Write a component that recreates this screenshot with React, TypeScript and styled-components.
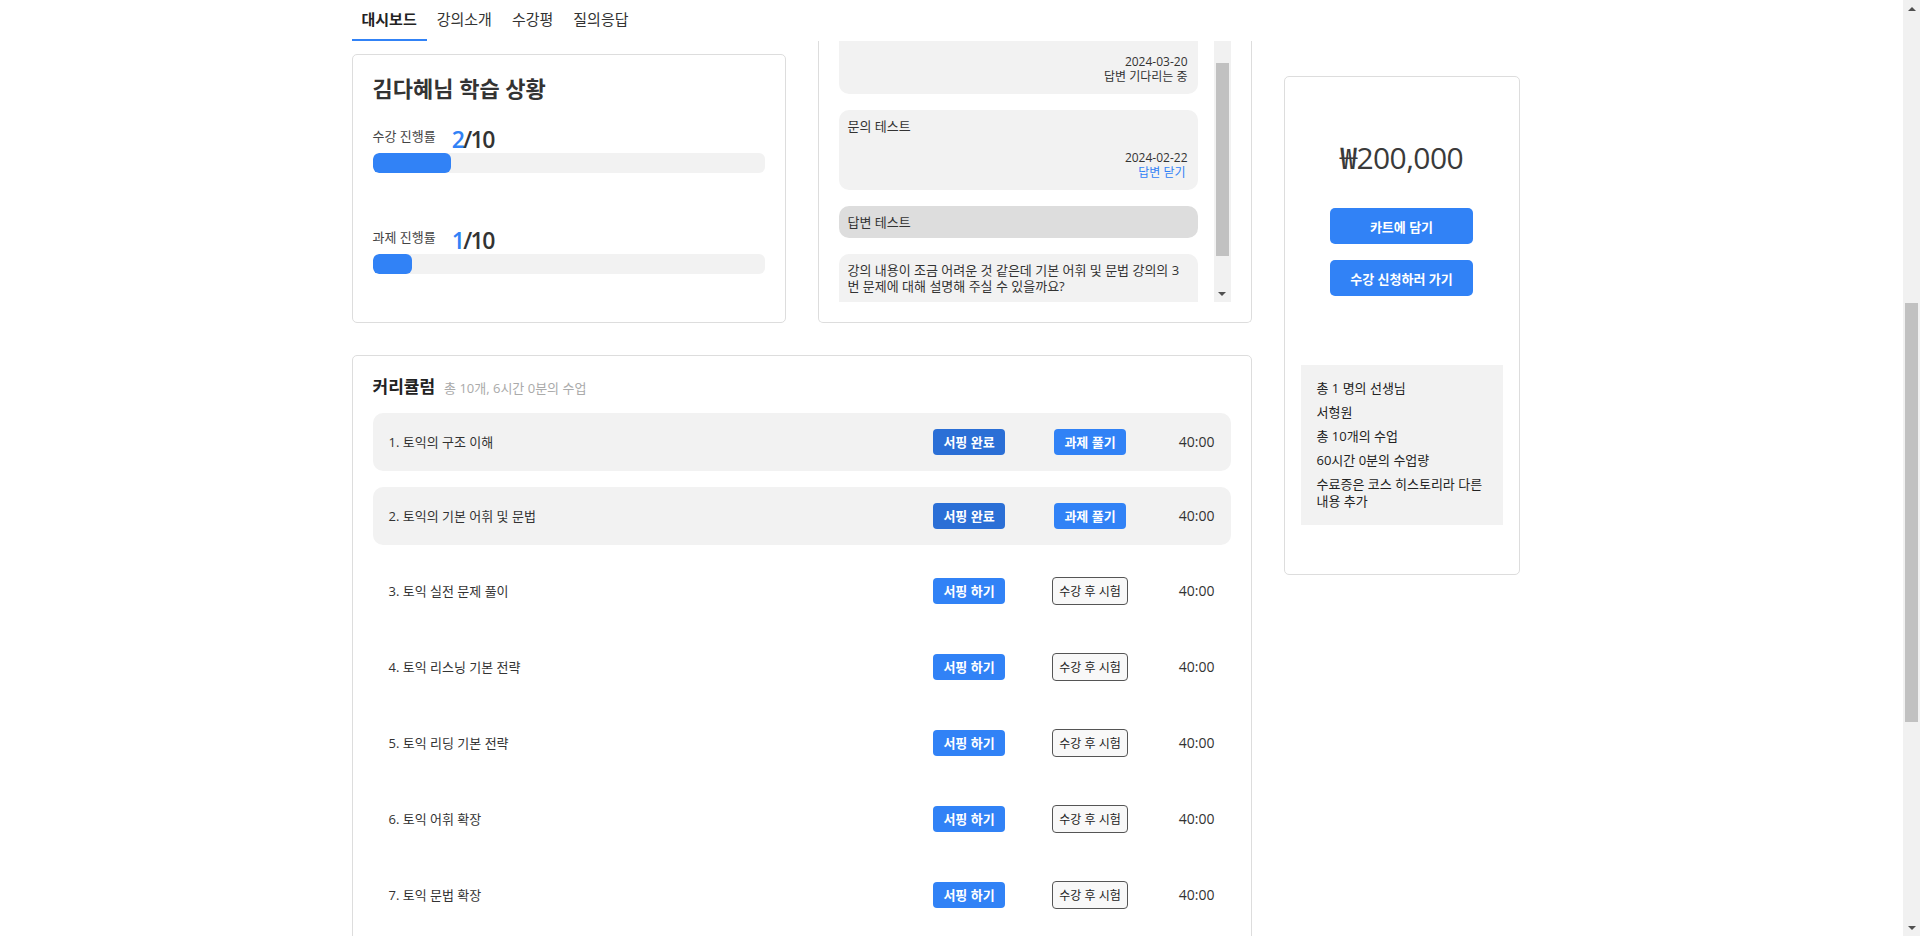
import React, { useLayoutEffect, useRef } from "react";
import styled, { createGlobalStyle } from "styled-components";

const GlobalStyle = createGlobalStyle`
  html, body { margin: 0; padding: 0; background: #fff; }
  * { box-sizing: border-box; }
  body {
    font-family: "Open Sans", "Noto Sans CJK KR", sans-serif;
    color: #333;
    padding-right: 17px;
  }
`;

/* Scrollbar drawing (browser chrome look) */
const ArrowBox = styled.div<{ $dir: "up" | "down" }>`
  flex: 0 0 17px;
  height: 17px;
  display: flex;
  align-items: center;
  justify-content: center;

  &::before {
    content: "";
    width: 0;
    height: 0;
    border-left: 4px solid transparent;
    border-right: 4px solid transparent;
    ${(p) =>
      p.$dir === "up"
        ? "border-bottom: 4px solid #505050;"
        : "border-top: 4px solid #505050;"}
  }
`;

const ScrollTrack = styled.div`
  width: 17px;
  background: #f1f1f1;
  display: flex;
  flex-direction: column;
`;

const PageScrollbar = styled(ScrollTrack)`
  position: fixed;
  top: 0;
  right: 0;
  height: 100vh;
  z-index: 10;
`;

const Thumb = styled.div<{ $offset: number; $size: number }>`
  margin: ${(p) => p.$offset}px 2px 0;
  height: ${(p) => p.$size}px;
  background: #c1c1c1;
`;

const TrackFill = styled.div`
  flex: 1;
`;

/* Layout */
const Page = styled.div`
  width: 1200px;
  margin: 0 auto;
  display: grid;
  grid-template-columns: 900px 300px;
  padding-bottom: 60px;
`;

const Main = styled.main`
  display: flex;
  flex-direction: column;
`;

const Aside = styled.aside`
  padding: 76px 32px 0;
`;

/* Tabs */
const Tabs = styled.nav`
  display: flex;
  height: 41px;
`;

const Tab = styled.a<{ $active?: boolean }>`
  display: block;
  padding: 9px 10px 10px;
  font-size: 15px;
  line-height: 20px;
  color: ${(p) => (p.$active ? "#222" : "#333")};
  font-weight: ${(p) => (p.$active ? 600 : 400)};
  border-bottom: 2px solid ${(p) => (p.$active ? "#3182f6" : "transparent")};
  cursor: pointer;
`;

/* Top row */
const TopRow = styled.div`
  display: grid;
  grid-template-columns: 434px 434px;
  column-gap: 32px;
  align-items: end;
`;

const StatusCard = styled.section`
  border: 1px solid #ddd;
  border-radius: 5px;
  padding: 20px 20px 48px;
`;

const StatusHeading = styled.h2`
  margin: 0 0 25px;
  font-size: 22px;
  line-height: 26px;
  font-weight: 700;
  color: #333;
`;

const ProgressGroup = styled.div`
  & + & {
    margin-top: 54px;
  }
`;

const ProgressHead = styled.div`
  display: flex;
  align-items: flex-start;
  gap: 16px;
`;

const ProgressLabel = styled.span`
  font-size: 13px;
  line-height: 20px;
  color: #444;
`;

const ProgressValue = styled.span`
  font-size: 23px;
  line-height: 27px;
  font-weight: 600;
  color: #333;
  letter-spacing: -0.07em;
`;

const Accent = styled.span`
  color: #3182f6;
`;

const Track = styled.div`
  height: 20px;
  border-radius: 6px;
  background: #f2f2f2;
  overflow: hidden;
`;

const Fill = styled.div`
  height: 100%;
  border-radius: 6px;
  background: #3182f6;
`;

/* Q&A */
const QnaCard = styled.section`
  border: 1px solid #ddd;
  border-top: none;
  border-radius: 0 0 5px 5px;
  padding: 0 20px 20px;
`;

const QnaBody = styled.div`
  display: flex;
  height: 261px;
`;

const QnaViewport = styled.div`
  flex: 1;
  overflow: hidden;
  padding-right: 16px;
  display: flex;
  flex-direction: column;
  gap: 16px;
`;

const Bubble = styled.div<{ $answer?: boolean }>`
  flex-shrink: 0;
  background: ${(p) => (p.$answer ? "#dddddd" : "#f2f2f2")};
  border-radius: 10px;
  padding: 8px 10px ${(p) => (p.$answer ? "8px" : "10px")} 9px;
`;

const BubbleText = styled.p`
  margin: 0;
  font-size: 13px;
  line-height: 16px;
  color: #333;
`;

const BubbleMeta = styled.div`
  margin-top: 16px;
  display: flex;
  flex-direction: column;
  align-items: flex-end;
  font-size: 12px;
  line-height: 15px;
  color: #333;
`;

const MetaLink = styled.button`
  all: unset;
  padding-right: 2px;
  color: #3182f6;
  font-size: 12px;
  line-height: 15px;
  cursor: pointer;
`;

/* Curriculum */
const CurriculumCard = styled.section`
  margin-top: 32px;
  border: 1px solid #ddd;
  border-radius: 5px;
  padding: 20px;
`;

const CurriculumHeader = styled.div`
  display: flex;
  align-items: baseline;
  gap: 9px;
  margin-bottom: 16px;
`;

const CurriculumTitle = styled.h3`
  margin: 0;
  font-size: 17px;
  line-height: 21px;
  font-weight: 700;
  color: #222;
`;

const CurriculumMeta = styled.span`
  font-size: 13px;
  color: #aaa;
`;

const LessonList = styled.div`
  display: flex;
  flex-direction: column;
  gap: 16px;
`;

const Lesson = styled.div<{ $done?: boolean }>`
  display: grid;
  grid-template-columns: 1fr 121px 121px 64px;
  align-items: center;
  padding: 16px;
  border-radius: 10px;
  background: ${(p) => (p.$done ? "#f2f2f2" : "transparent")};
`;

const LessonTitle = styled.span`
  font-size: 13px;
  line-height: 20px;
  color: #333;
`;

const Cell = styled.div`
  display: flex;
  justify-content: center;
`;

const Time = styled.span`
  text-align: right;
  font-size: 14px;
  line-height: 20px;
  color: #333;
`;

const SolidButton = styled.button<{ $dark?: boolean }>`
  height: 26px;
  padding: 0 10px;
  border: none;
  border-radius: 4px;
  background: ${(p) => (p.$dark ? "#2b6fd6" : "#3182f6")};
  color: #fff;
  font-family: inherit;
  font-size: 13px;
  font-weight: 700;
  line-height: 26px;
  cursor: pointer;
`;

const OutlineButton = styled.button`
  height: 28px;
  padding: 0 6px;
  border: 1px solid #555;
  border-radius: 4px;
  background: #f8f8f8;
  color: #222;
  font-family: inherit;
  font-size: 12px;
  cursor: pointer;
`;

/* Aside */
const PriceCard = styled.div`
  border: 1px solid #ddd;
  border-radius: 5px;
  padding: 16px;
  display: flex;
  flex-direction: column;
  align-items: center;
`;

const Price = styled.div`
  margin-top: 45px;
  font-size: 30px;
  line-height: 40px;
  font-weight: 500;
  color: #3a3a3a;
  letter-spacing: -0.02em;
`;

const ActionStack = styled.div`
  margin-top: 30px;
  display: flex;
  flex-direction: column;
  gap: 16px;
`;

const ActionButton = styled.button`
  width: 143px;
  height: 36px;
  border: none;
  border-radius: 5px;
  background: #3182f6;
  color: #fff;
  font-family: inherit;
  font-size: 13px;
  font-weight: 700;
  cursor: pointer;
`;

const InfoBox = styled.ul`
  align-self: stretch;
  margin: 69px 0 33px;
  padding: 15px 16px;
  list-style: none;
  background: #f2f2f2;
  display: flex;
  flex-direction: column;
  gap: 7px;
`;

const InfoItem = styled.li`
  font-size: 13px;
  line-height: 17px;
  color: #222;
  word-break: keep-all;
`;

type LessonItem = { title: string; done?: boolean };

const lessons: LessonItem[] = [
  { title: "토익의 구조 이해", done: true },
  { title: "토익의 기본 어휘 및 문법", done: true },
  { title: "토익 실전 문제 풀이" },
  { title: "토익 리스닝 기본 전략" },
  { title: "토익 리딩 기본 전략" },
  { title: "토익 어휘 확장" },
  { title: "토익 문법 확장" },
  { title: "토익 실전 모의고사 1" },
  { title: "토익 실전 모의고사 2" },
  { title: "토익 최종 정리" },
];

type Qna = {
  answer?: boolean;
  text: string;
  date?: string;
  status?: string;
  link?: string;
};

const qna: Qna[] = [
  {
    text: "수업 자료는 어디서 받을 수 있나요?",
    date: "2024-03-20",
    status: "답변 기다리는 중",
  },
  { text: "문의 테스트", date: "2024-02-22", link: "답변 닫기" },
  { answer: true, text: "답변 테스트" },
  {
    text: "강의 내용이 조금 어려운 것 같은데 기본 어휘 및 문법 강의의 3번 문제에 대해 설명해 주실 수 있을까요?",
    date: "2024-02-20",
    status: "답변 기다리는 중",
  },
];

const progress = [
  { label: "수강 진행률", done: 2, total: 10 },
  { label: "과제 진행률", done: 1, total: 10 },
];

const tabs = ["대시보드", "강의소개", "수강평", "질의응답"];

export default function App() {
  const listRef = useRef<HTMLDivElement>(null);

  useLayoutEffect(() => {
    if (listRef.current) listRef.current.scrollTop = 27;
  }, []);

  return (
    <>
      <GlobalStyle />
      <PageScrollbar aria-hidden>
        <ArrowBox $dir="up" />
        <Thumb $offset={286} $size={419} />
        <TrackFill />
        <ArrowBox $dir="down" />
      </PageScrollbar>
      <Page>
        <Main>
          <Tabs>
            {tabs.map((t, i) => (
              <Tab key={t} $active={i === 0}>
                {t}
              </Tab>
            ))}
          </Tabs>

          <TopRow>
            <StatusCard>
              <StatusHeading>김다혜님 학습 상황</StatusHeading>
              {progress.map((p) => (
                <ProgressGroup key={p.label}>
                  <ProgressHead>
                    <ProgressLabel>{p.label}</ProgressLabel>
                    <ProgressValue>
                      <Accent>{p.done}</Accent>/{p.total}
                    </ProgressValue>
                  </ProgressHead>
                  <Track>
                    <Fill style={{ width: `${(p.done / p.total) * 100}%` }} />
                  </Track>
                </ProgressGroup>
              ))}
            </StatusCard>

            <QnaCard>
              <QnaBody>
                <QnaViewport ref={listRef}>
                  {qna.map((q, i) => (
                    <Bubble key={i} $answer={q.answer}>
                      <BubbleText>{q.text}</BubbleText>
                      {q.date && (
                        <BubbleMeta>
                          <span>{q.date}</span>
                          {q.status && <span>{q.status}</span>}
                          {q.link && <MetaLink>{q.link}</MetaLink>}
                        </BubbleMeta>
                      )}
                    </Bubble>
                  ))}
                </QnaViewport>
                <ScrollTrack aria-hidden>
                  <Thumb $offset={22} $size={193} />
                  <TrackFill />
                  <ArrowBox $dir="down" />
                </ScrollTrack>
              </QnaBody>
            </QnaCard>
          </TopRow>

          <CurriculumCard>
            <CurriculumHeader>
              <CurriculumTitle>커리큘럼</CurriculumTitle>
              <CurriculumMeta>총 10개, 6시간 0분의 수업</CurriculumMeta>
            </CurriculumHeader>
            <LessonList>
              {lessons.map((l, i) => (
                <Lesson key={l.title} $done={l.done}>
                  <LessonTitle>
                    {i + 1}. {l.title}
                  </LessonTitle>
                  <Cell>
                    <SolidButton $dark={l.done}>
                      {l.done ? "서핑 완료" : "서핑 하기"}
                    </SolidButton>
                  </Cell>
                  <Cell>
                    {l.done ? (
                      <SolidButton>과제 풀기</SolidButton>
                    ) : (
                      <OutlineButton>수강 후 시험</OutlineButton>
                    )}
                  </Cell>
                  <Time>40:00</Time>
                </Lesson>
              ))}
            </LessonList>
          </CurriculumCard>
        </Main>

        <Aside>
          <PriceCard>
            <Price>₩200,000</Price>
            <ActionStack>
              <ActionButton>카트에 담기</ActionButton>
              <ActionButton>수강 신청하러 가기</ActionButton>
            </ActionStack>
            <InfoBox>
              <InfoItem>총 1 명의 선생님</InfoItem>
              <InfoItem>서형원</InfoItem>
              <InfoItem>총 10개의 수업</InfoItem>
              <InfoItem>60시간 0분의 수업량</InfoItem>
              <InfoItem>수료증은 코스 히스토리라 다른 내용 추가</InfoItem>
            </InfoBox>
          </PriceCard>
        </Aside>
      </Page>
    </>
  );
}
